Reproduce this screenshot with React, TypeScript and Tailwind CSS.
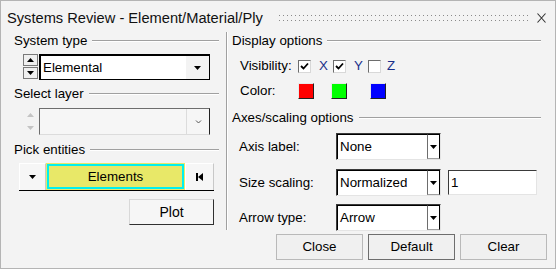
import React from "react";

function Header({ label, className = "" }: { label: string; className?: string }) {
  return (
    <div className={"flex items-center h-[16px] leading-[16px] " + className}>
      <span className="whitespace-nowrap">{label}</span>
      <div className="flex-1 ml-[5px] h-[2px] border-t border-[#a0a0a0] border-b border-b-white" />
    </div>
  );
}

function Tri({ dir, color = "#000" }: { dir: "up" | "down"; color?: string }) {
  return (
    <svg width="7" height="4" viewBox="0 0 7 4">
      {dir === "up" ? (
        <polygon points="3.5,0 7,4 0,4" fill={color} />
      ) : (
        <polygon points="0,0 7,0 3.5,4" fill={color} />
      )}
    </svg>
  );
}

function Check({ checked }: { checked: boolean }) {
  return (
    <div className="w-[13px] h-[13px] bg-white border border-t-[#6d6d6d] border-l-[#6d6d6d] border-r-[#d8d8d8] border-b-[#d8d8d8] flex items-center justify-center">
      {checked && (
        <svg width="9" height="9" viewBox="0 0 9 9">
          <polyline points="1,4 3.5,6.5 8,1.5" fill="none" stroke="#000" strokeWidth="1.8" />
        </svg>
      )}
    </div>
  );
}

function Swatch({ color }: { color: string }) {
  return (
    <div
      className="w-[16px] h-[16px] border border-t-[#e8e8e8] border-l-[#e8e8e8] border-r-[#202020] border-b-[#202020]"
      style={{ backgroundColor: color }}
    />
  );
}

function RSelect({ value }: { value: string }) {
  return (
    <div className="w-[105px] h-[27px] flex bg-white border border-t-[#3a3a3a] border-l-[#3a3a3a] border-r-[#e4e4e4] border-b-[#e4e4e4]">
      <div className="flex-1 flex items-center pl-[2px] border-t border-l border-[#000] border-b-0 border-r-0 leading-none">
        {value}
      </div>
      <div className="w-[13px] flex items-center justify-center bg-white border-t border-[#000] border-l border-l-[#6d6d6d] border-r border-r-[#000] border-b border-b-[#a0a0a0] my-0">
        <Tri dir="down" />
      </div>
    </div>
  );
}

function Btn({ label, dflt = false }: { label: string; dflt?: boolean }) {
  return (
    <div
      className={
        "w-[87px] h-[26px] flex items-center justify-center text-[13.33px] bg-[#f0f0f0] border " +
        (dflt ? "border-[#6e6e6e]" : "border-[#b9b9b9]")
      }
    >
      {label}
    </div>
  );
}

export default function App() {
  return (
    <div className="w-[556px] h-[269px] bg-[#f3f3f3] border border-[#b4b4b4] font-['Liberation_Sans',Arial,sans-serif] text-[13.33px] text-black flex flex-col overflow-hidden">
      {/* title bar */}
      <div className="h-[31px] flex items-start pl-[6px] pr-[9px] pt-[9px] shrink-0">
        <span className="text-[14.67px] leading-[17px] text-[#111] whitespace-nowrap">
          Systems Review - Element/Material/Ply
        </span>
        <svg className="ml-[16px] mt-[4px] flex-1" height="9">
          <defs>
            <pattern id="dots" width="4" height="9" patternUnits="userSpaceOnUse">
              <rect x="0" y="1" width="1" height="1" fill="#8a8a8a" />
              <rect x="0" y="6" width="1" height="1" fill="#8a8a8a" />
            </pattern>
          </defs>
          <rect x="0" y="0" width="100%" height="9" fill="url(#dots)" />
        </svg>
        <svg className="ml-[9px] mt-[3px]" width="9" height="10" viewBox="0 0 9 10">
          <path d="M0.5 0.5 L8.5 9.5 M8.5 0.5 L0.5 9.5" stroke="#333" strokeWidth="1.1" />
        </svg>
      </div>

      {/* body */}
      <div className="flex h-[198px] shrink-0">
        {/* left */}
        <div className="w-[225px] flex flex-col">
          <Header label="System type" className="mt-[1px] ml-[13px] mr-[7px]" />
          <div className="mt-[5px] h-[26px] flex ml-[22px]">
            <div className="w-[15px] flex flex-col">
              <div className="h-[12px] mb-[1px] flex items-center justify-center bg-[#f0f0f0] border border-[#7a7a7a]">
                <Tri dir="up" />
              </div>
              <div className="h-[12px] flex items-center justify-center bg-[#f0f0f0] border border-[#7a7a7a]">
                <Tri dir="down" />
              </div>
            </div>
            <div className="w-[171px] ml-[1px] flex bg-white border-t-2 border-l-2 border-[#000] border-r border-b border-r-[#000] border-b-[#000]">
              <div className="flex-1 flex items-center pl-[2px]">Elemental</div>
              <div className="w-[23px] flex items-center justify-center bg-[#f3f3f3]">
                <Tri dir="down" />
              </div>
            </div>
          </div>

          <Header label="Select layer" className="mt-[6px] ml-[13px] mr-[7px]" />
          <div className="mt-[6px] h-[27px] flex ml-[22px]">
            <div className="w-[15px] flex flex-col items-center justify-center gap-[9px]">
              <Tri dir="up" color="#c4c4c4" />
              <Tri dir="down" color="#c4c4c4" />
            </div>
            <div className="w-[171px] ml-[1px] flex bg-[#f6f6f6] border-t border-l border-[#6d6d6d] border-r border-b border-r-[#222] border-b-[#dcdcdc]">
              <div className="flex-1" />
              <div className="w-[23px] flex items-center justify-center border-l border-[#dcdcdc]">
                <svg width="7" height="4" viewBox="0 0 7 4">
                  <polyline points="1,0.5 3.5,3 6,0.5" fill="none" stroke="#555" strokeWidth="1" />
                </svg>
              </div>
            </div>
          </div>

          <Header label="Pick entities" className="mt-[7px] ml-[13px] mr-[7px]" />
          <div className="mt-[5px] h-[28px] ml-[18px] w-[195px] flex border-b border-black">
            <div className="w-[27px] flex items-center justify-center bg-[#f6f6f6] border-t border-l border-white border-r border-r-[#c8c8c8]">
              <Tri dir="down" />
            </div>
            <div className="w-[139px] bg-[#e8e868] p-[1px]">
              <div className="w-full h-full border-[2px] border-[#00f0f0] flex items-center justify-center">
                Elements
              </div>
            </div>
            <div className="flex-1 flex items-center justify-center bg-[#f6f6f6] border-t border-l border-white border-r border-r-[#c8c8c8]">
              <svg width="7" height="8" viewBox="0 0 7 8">
                <rect x="0" y="0" width="2" height="8" fill="#000" />
                <polygon points="7,0 7,8 2,4" fill="#000" />
              </svg>
            </div>
          </div>

          <div className="mt-[8px] ml-[128px] w-[85px] h-[26px] flex items-center justify-center text-[14px] bg-[#f6f6f6] border border-t-[#d8d8d8] border-l-[#d8d8d8] border-r-[#303030] border-b-[#303030]">
            Plot
          </div>
        </div>

        {/* separator */}
        <div className="w-[2px] border-l border-[#a0a0a0] border-r border-r-white" />

        {/* right */}
        <div className="flex-1 flex flex-col">
          <Header label="Display options" className="mt-[1px] ml-[4px] mr-[14px]" />
          <div className="mt-[9px] h-[16px] flex items-center ml-[12px]">
            <span className="w-[58px]">Visibility:</span>
            <Check checked />
            <span className="ml-[8px] w-[14px] text-[#1a2f8a]">X</span>
            <Check checked />
            <span className="ml-[8px] w-[14px] text-[#1a2f8a]">Y</span>
            <Check checked={false} />
            <span className="ml-[6px] text-[#1a2f8a]">Z</span>
          </div>
          <div className="mt-[9px] h-[16px] flex items-center ml-[12px]">
            <span className="w-[58px]">Color:</span>
            <Swatch color="#ff0000" />
            <div className="w-[17px]" />
            <Swatch color="#00ff00" />
            <div className="w-[23px]" />
            <Swatch color="#0000ff" />
          </div>

          <Header label="Axes/scaling options" className="mt-[11px] ml-[4px] mr-[14px]" />
          <div className="mt-[7px] flex items-center ml-[11px]">
            <span className="w-[97px]">Axis label:</span>
            <RSelect value="None" />
          </div>
          <div className="mt-[9px] flex items-center ml-[11px]">
            <span className="w-[97px]">Size scaling:</span>
            <RSelect value="Normalized" />
            <div className="ml-[7px] w-[89px] h-[25px] bg-white border border-t-[#3a3a3a] border-l-[#3a3a3a] border-r-[#e4e4e4] border-b-[#e4e4e4] flex items-center pl-[2px]">
              1
            </div>
          </div>
          <div className="mt-[8px] flex items-center ml-[11px]">
            <span className="w-[97px]">Arrow type:</span>
            <RSelect value="Arrow" />
          </div>
        </div>
      </div>

      {/* buttons */}
      <div className="flex justify-end gap-[5px] pr-[8px] pt-[4px]">
        <Btn label="Close" />
        <Btn label="Default" dflt />
        <Btn label="Clear" />
      </div>
    </div>
  );
}
